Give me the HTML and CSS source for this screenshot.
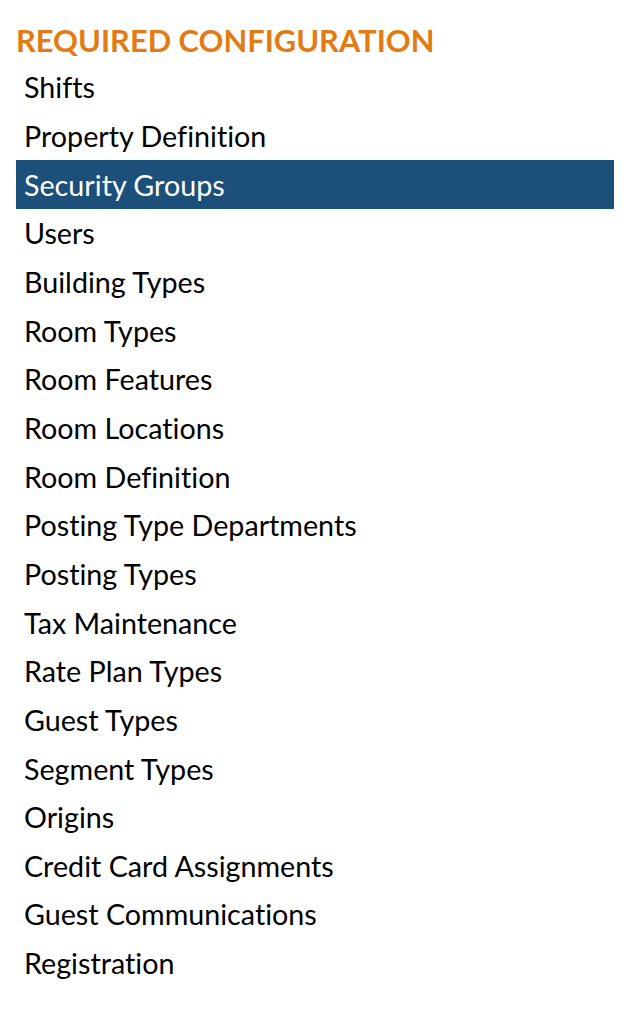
FILE: index.html
```html
<!DOCTYPE html>
<html>
<head>
<meta charset="utf-8">
<link rel="stylesheet" href="styles.css">
</head>
<body>
<div class="panel">
  <h2 class="title">REQUIRED CONFIGURATION</h2>
  <ul class="menu">
    <li class="item">Shifts</li>
    <li class="item">Property Definition</li>
    <li class="item active">Security Groups</li>
    <li class="item">Users</li>
    <li class="item">Building Types</li>
    <li class="item">Room Types</li>
    <li class="item">Room Features</li>
    <li class="item">Room Locations</li>
    <li class="item">Room Definition</li>
    <li class="item">Posting Type Departments</li>
    <li class="item">Posting Types</li>
    <li class="item">Tax Maintenance</li>
    <li class="item">Rate Plan Types</li>
    <li class="item">Guest Types</li>
    <li class="item">Segment Types</li>
    <li class="item">Origins</li>
    <li class="item">Credit Card Assignments</li>
    <li class="item">Guest Communications</li>
    <li class="item">Registration</li>
  </ul>
</div>
</body>
</html>
```
FILE: styles.css
```css
html, body {
  margin: 0;
  padding: 0;
  background: #ffffff;
}
body {
  font-family: Lato, "Open Sans", sans-serif;
  font-variant-ligatures: none;
}
.panel {
  padding: 23px 12px 0 16px;
}
.title {
  margin: 0;
  font-size: 30.85px;
  font-weight: 700;
  line-height: 36px;
  color: #e47b12;
}
.menu {
  list-style: none;
  margin: 4px 0 0 0;
  padding: 0;
}
.item {
  font-size: 28.7px;
  line-height: 36px;
  padding: 6.33px 8px;
  color: #000000;
}
.item.active {
  background: #1c4f79;
  color: #ffffff;
}
```
